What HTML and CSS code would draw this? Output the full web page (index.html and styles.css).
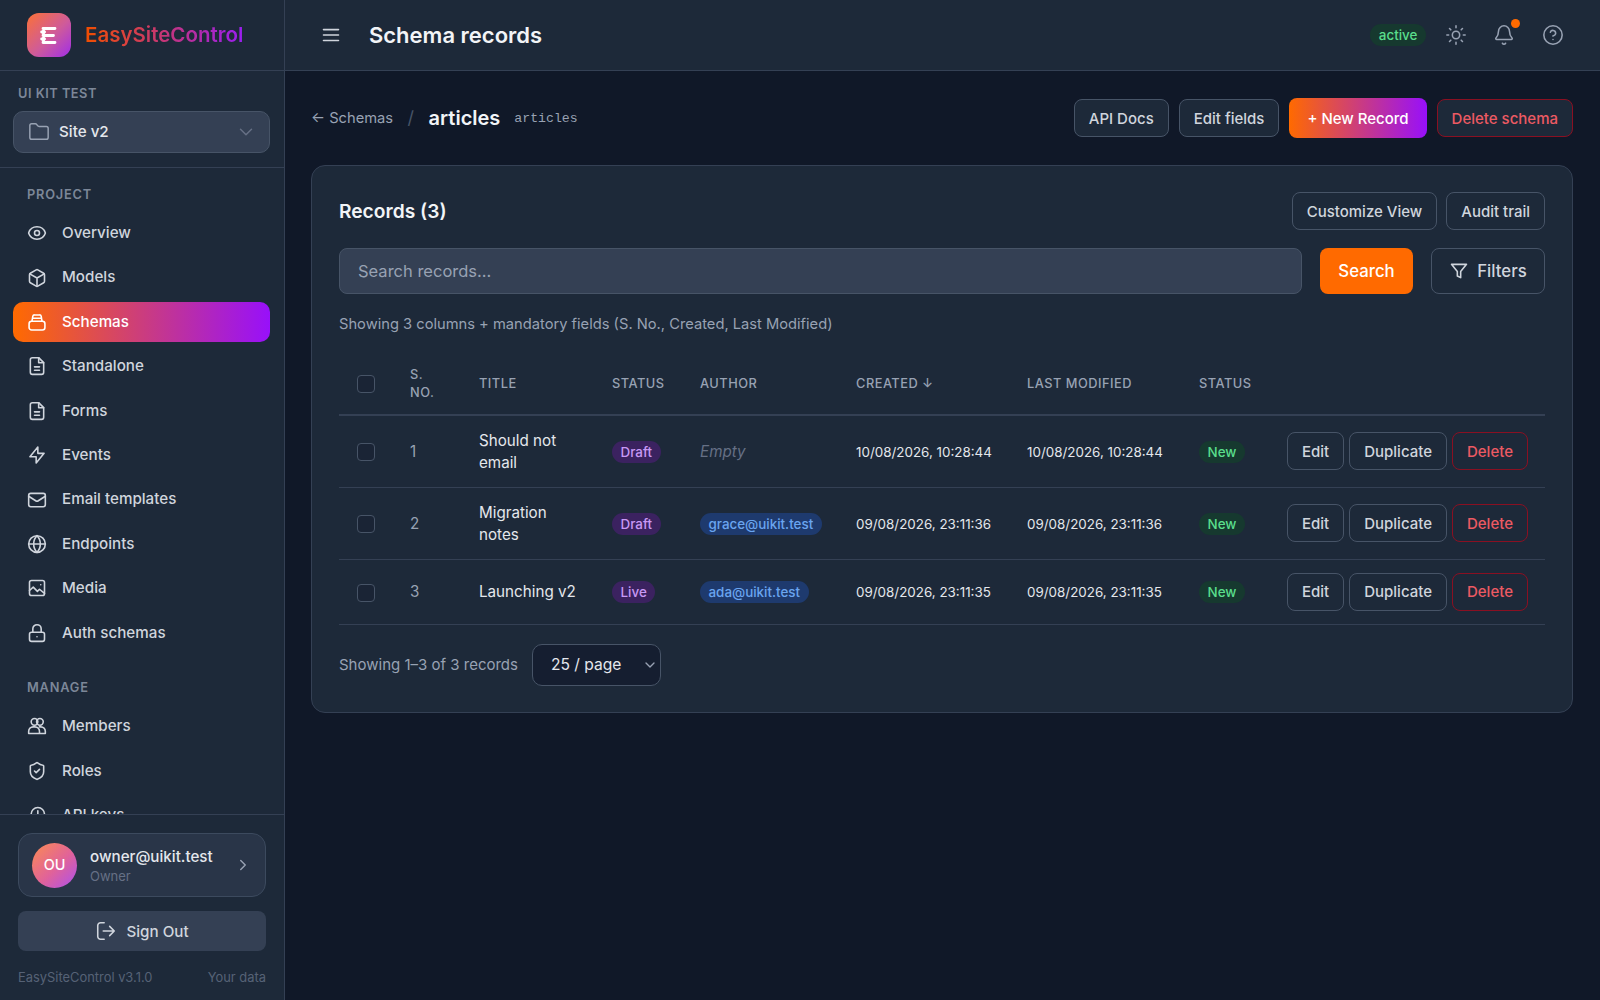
FILE: index.html
```html
<!DOCTYPE html>
<html lang="en">
<head>
<meta charset="utf-8">
<title>Schema records</title>
<link rel="stylesheet" href="styles.css">
</head>
<body>
<div class="app">
  <aside class="sidebar">
    <div class="brand">
      <div class="logo">
        <svg viewBox="0 0 24 24" width="24" height="24" fill="none" stroke="#fff" stroke-width="2.800" stroke-linecap="round"><path d="M6 5.500h12M6 12.500h10.500M6 19.500h12M6.500 5.500v14M4.600 9h3M4.600 16h3"/></svg>
      </div>
      <span class="brand-name">EasySiteControl</span>
    </div>
    <div class="org">
      <div class="org-label">UI KIT TEST</div>
      <div class="site-select">
        <svg class="ic site-ic" viewBox="0 0 24 24"><path d="M20 20a2 2 0 0 0 2-2V8a2 2 0 0 0-2-2h-7.900a2 2 0 0 1-1.690-.9L9.600 3.900A2 2 0 0 0 7.930 3H4a2 2 0 0 0-2 2v13a2 2 0 0 0 2 2Z"/></svg>
        <span class="site-name">Site v2</span>
        <svg class="ic site-chev" viewBox="0 0 24 24"><path d="m6 9 6 6 6-6"/></svg>
      </div>
    </div>
    <nav class="nav">
      <div class="nav-label">PROJECT</div>
      <a class="nav-item"><svg class="ic" viewBox="0 0 24 24"><path d="M2.040 12.320a1 1 0 0 1 0-.640C3.420 7.510 7.360 4.500 12 4.500s8.570 3 9.960 7.180c.07.200.07.430 0 .640C20.580 16.490 16.640 19.500 12 19.500s-8.570-3-9.960-7.180Z"/><circle cx="12" cy="12" r="3"/></svg>Overview</a>
      <a class="nav-item"><svg class="ic" viewBox="0 0 24 24"><path d="M21 16V8a2 2 0 0 0-1-1.730l-7-4a2 2 0 0 0-2 0l-7 4A2 2 0 0 0 3 8v8a2 2 0 0 0 1 1.730l7 4a2 2 0 0 0 2 0l7-4a2 2 0 0 0 1-1.730Z"/><path d="M3.300 7 12 12l8.700-5M12 22V12"/></svg>Models</a>
      <a class="nav-item active"><svg class="ic" viewBox="0 0 24 24"><rect x="2.500" y="11" width="19" height="10.500" rx="3"/><path d="m6 11 1-6a2 2 0 0 1 2-1.500h6a2 2 0 0 1 2 1.500l1 6M6.500 7.500h11"/></svg>Schemas</a>
      <a class="nav-item"><svg class="ic" viewBox="0 0 24 24"><path d="M14 2H6.500A2.500 2.500 0 0 0 4 4.500v15A2.500 2.500 0 0 0 6.500 22h11a2.500 2.500 0 0 0 2.500-2.500V8Z"/><path d="M14 2v6h6M9 13h6M9 17h6"/></svg>Standalone</a>
      <a class="nav-item"><svg class="ic" viewBox="0 0 24 24"><path d="M14 2H6.500A2.500 2.500 0 0 0 4 4.500v15A2.500 2.500 0 0 0 6.500 22h11a2.500 2.500 0 0 0 2.500-2.500V8Z"/><path d="M14 2v6h6M9 13h6M9 17h6"/></svg>Forms</a>
      <a class="nav-item"><svg class="ic" viewBox="0 0 24 24"><path d="M13 2.500V10h7.500L11 21.500V14H3.500Z"/></svg>Events</a>
      <a class="nav-item"><svg class="ic" viewBox="0 0 24 24"><rect x="2" y="4" width="20" height="16" rx="2.500"/><path d="m2 7.500 8.900 5.700a2 2 0 0 0 2.200 0L22 7.500"/></svg>Email templates</a>
      <a class="nav-item"><svg class="ic" viewBox="0 0 24 24"><circle cx="12" cy="12" r="10"/><path d="M2 12h20M12 2c2.600 2.700 4 6.300 4 10s-1.400 7.300-4 10c-2.600-2.700-4-6.300-4-10s1.400-7.300 4-10Z"/></svg>Endpoints</a>
      <a class="nav-item"><svg class="ic" viewBox="0 0 24 24"><rect x="3" y="3" width="18" height="18" rx="2.500"/><path d="m3 15 4.500-4 5 5 2.500-2.500 6 5M16.500 8h.01"/></svg>Media</a>
      <a class="nav-item"><svg class="ic" viewBox="0 0 24 24"><rect x="3" y="11" width="18" height="11" rx="2.500"/><path d="M7 11V7a5 5 0 0 1 10 0v4M12 16.500h.01"/></svg>Auth schemas</a>
      <div class="nav-label manage">MANAGE</div>
      <a class="nav-item"><svg class="ic" viewBox="0 0 24 24"><circle cx="9" cy="7" r="4"/><circle cx="15.500" cy="7" r="4"/><path d="M2 21v-2.500A5.500 5.500 0 0 1 7.500 13h2a5.500 5.500 0 0 1 5.500 5.500V21ZM15 13h1.500a5.500 5.500 0 0 1 5.500 5.500V21h-7"/></svg>Members</a>
      <a class="nav-item"><svg class="ic" viewBox="0 0 24 24"><path d="M20 13c0 5-3.500 7.500-7.660 8.950a1 1 0 0 1-.670-.010C7.500 20.500 4 18 4 13V6a1 1 0 0 1 1-1c2 0 4.500-1.200 6.240-2.720a1.170 1.170 0 0 1 1.520 0C14.510 3.810 17 5 19 5a1 1 0 0 1 1 1Z"/><path d="m9 12 2 2 4-4"/></svg>Roles</a>
      <a class="nav-item"><svg class="ic" viewBox="0 0 24 24"><circle cx="13" cy="11" r="8"/><path d="M13 7v4l-2 2M7 17l-3 4"/></svg>API keys</a>
    </nav>
    <div class="side-foot">
      <div class="user-card">
        <div class="avatar">OU</div>
        <div class="user-text">
          <div class="user-mail">owner@uikit.test</div>
          <div class="user-role">Owner</div>
        </div>
        <svg class="ic user-chev" viewBox="0 0 24 24"><path d="m9 18 6-6-6-6"/></svg>
      </div>
      <button class="signout"><svg class="ic" viewBox="0 0 24 24"><path d="M10 21H6a3 3 0 0 1-3-3V6a3 3 0 0 1 3-3h4M16 17l5-5-5-5M21 12H9"/></svg>Sign Out</button>
      <div class="meta"><span>EasySiteControl v3.1.0</span><span>Your data</span></div>
    </div>
  </aside>

  <div class="main">
    <header class="topbar">
      <svg class="ic menu" viewBox="0 0 24 24"><path d="M3 5.500h18M3 12h18M3 18.500h18"/></svg>
      <h1 class="page-title">Schema records</h1>
      <div class="top-right">
        <span class="pill pill-green active-pill">active</span>
        <svg class="ic top-ic" viewBox="0 0 24 24"><circle cx="12" cy="12" r="4"/><path d="M12 2v2M12 20v2M4.930 4.930l1.410 1.410M17.660 17.660l1.410 1.410M2 12h2M20 12h2M6.340 17.660l-1.410 1.410M19.070 4.930l-1.410 1.410"/></svg>
        <span class="bell"><svg class="ic top-ic" viewBox="0 0 24 24"><path d="M10.270 21a2 2 0 0 0 3.460 0M3.260 15.330A1 1 0 0 0 4 17h16a1 1 0 0 0 .74-1.670C19.410 13.960 18 12.500 18 8A6 6 0 0 0 6 8c0 4.500-1.410 5.960-2.740 7.330Z"/></svg><i class="dot"></i></span>
        <svg class="ic top-ic" viewBox="0 0 24 24"><circle cx="12" cy="12" r="10"/><path d="M9.090 9a3 3 0 0 1 5.830 1c0 2-3 3-3 3M12 17h.01"/></svg>
      </div>
    </header>

    <main class="content">
      <div class="crumbs">
        <div class="crumb-left">
          <a class="back">← Schemas</a>
          <span class="slash">/</span>
          <span class="crumb-title">articles</span>
          <code class="crumb-code">articles</code>
        </div>
        <div class="crumb-actions">
          <button class="btn btn-dark">API Docs</button>
          <button class="btn btn-dark">Edit fields</button>
          <button class="btn btn-grad">+ New Record</button>
          <button class="btn btn-danger-dark">Delete schema</button>
        </div>
      </div>

      <section class="card">
        <div class="card-head">
          <h2 class="card-title">Records (3)</h2>
          <div class="card-actions">
            <button class="btn">Customize View</button>
            <button class="btn">Audit trail</button>
          </div>
        </div>
        <div class="search-row">
          <div class="search-input">Search records...</div>
          <button class="search-btn">Search</button>
          <button class="filter-btn"><svg class="ic" viewBox="0 0 24 24"><path d="M3 4h18l-7 8.500V20l-4-2v-5.500Z"/></svg>Filters</button>
        </div>
        <p class="hint">Showing 3 columns + mandatory fields (S. No., Created, Last Modified)</p>

        <table class="records">
          <colgroup>
            <col class="c1"><col class="c2"><col class="c3"><col class="c4"><col class="c5"><col class="c6"><col class="c7"><col class="c8"><col class="c9">
          </colgroup>
          <thead>
            <tr>
              <th><input class="check" type="checkbox" aria-label="Select all"></th>
              <th>S. No.</th>
              <th>Title</th>
              <th>Status</th>
              <th>Author</th>
              <th>Created ↓</th>
              <th>Last Modified</th>
              <th>Status</th>
              <th></th>
            </tr>
          </thead>
          <tbody>
            <tr>
              <td><input class="check" type="checkbox" aria-label="Select"></td>
              <td class="num">1</td>
              <td class="ttl">Should not email</td>
              <td><span class="pill pill-purple">Draft</span></td>
              <td><em class="empty">Empty</em></td>
              <td class="date">10/08/2026, 10:28:44</td>
              <td class="date">10/08/2026, 10:28:44</td>
              <td><span class="pill pill-green">New</span></td>
              <td><div class="row-actions"><button class="btn">Edit</button><button class="btn">Duplicate</button><button class="btn btn-danger">Delete</button></div></td>
            </tr>
            <tr>
              <td><input class="check" type="checkbox" aria-label="Select"></td>
              <td class="num">2</td>
              <td class="ttl">Migration notes</td>
              <td><span class="pill pill-purple">Draft</span></td>
              <td><span class="pill pill-blue">grace@uikit.test</span></td>
              <td class="date">09/08/2026, 23:11:36</td>
              <td class="date">09/08/2026, 23:11:36</td>
              <td><span class="pill pill-green">New</span></td>
              <td><div class="row-actions"><button class="btn">Edit</button><button class="btn">Duplicate</button><button class="btn btn-danger">Delete</button></div></td>
            </tr>
            <tr>
              <td><input class="check" type="checkbox" aria-label="Select"></td>
              <td class="num">3</td>
              <td class="ttl">Launching v2</td>
              <td><span class="pill pill-purple">Live</span></td>
              <td><span class="pill pill-blue">ada@uikit.test</span></td>
              <td class="date">09/08/2026, 23:11:35</td>
              <td class="date">09/08/2026, 23:11:35</td>
              <td><span class="pill pill-green">New</span></td>
              <td><div class="row-actions"><button class="btn">Edit</button><button class="btn">Duplicate</button><button class="btn btn-danger">Delete</button></div></td>
            </tr>
          </tbody>
        </table>

        <div class="pager">
          <span class="pager-text">Showing 1–3 of 3 records</span>
          <div class="page-select"><span class="page-value">25 / page</span><svg class="ic" viewBox="0 0 24 24"><path d="m6 9 6 6 6-6"/></svg></div>
        </div>
      </section>
    </main>
  </div>
</div>
</body>
</html>
```

FILE: styles.css
```css
* { box-sizing: border-box; }
html, body { margin: 0; height: 100%; }
body {
  background: #101828;
  color: #e4e7ec;
  font-family: Inter, "Liberation Sans", sans-serif;
  font-size: 14px;
  line-height: 1.6;
  overflow: hidden;
}
button { font-family: inherit; cursor: pointer; }
h1, h2, p { margin: 0; }

.ic {
  width: 20px;
  height: 20px;
  fill: none;
  stroke: currentColor;
  stroke-width: 1.9;
  stroke-linecap: round;
  stroke-linejoin: round;
  flex: none;
}

.app { display: flex; height: 1000px; }

/* sidebar */
.sidebar {
  width: 285px;
  flex: none;
  display: flex;
  flex-direction: column;
  background: #1d2939;
  border-right: 1px solid #344054;
}
.brand {
  height: 71px;
  flex: none;
  display: flex;
  align-items: center;
  gap: 14px;
  padding: 0 27px;
  border-bottom: 1px solid #344054;
}
.logo {
  width: 44px;
  height: 44px;
  border-radius: 12px;
  background: linear-gradient(135deg, #fb7136, #cf5b9a 55%, #a02ee8);
  display: flex;
  align-items: center;
  justify-content: center;
}
.brand-name {
  font-size: 20.5px;
  font-weight: 600;
  line-height: 1.2;
  background: linear-gradient(90deg, #f04e00, #9a1ef0);
  -webkit-background-clip: text;
  background-clip: text;
  color: transparent;
}
.org {
  flex: none;
  height: 97px;
  padding: 13px 14px 0 13px;
  border-bottom: 1px solid #344054;
}
.org-label {
  padding-left: 5px;
  font-size: 12.8px;
  line-height: 20px;
  font-weight: 600;
  letter-spacing: 0.5px;
  color: #7c8798;
}
.site-select {
  margin-top: 7px;
  height: 42px;
  display: flex;
  align-items: center;
  padding: 0 12px 0 14px;
  background: #344054;
  border: 1px solid #475467;
  border-radius: 10px;
  color: #e4e7ec;
}
.site-ic { width: 22px; height: 22px; color: #98a2b3; stroke-width: 1.6; }
.site-name { margin-left: 9px; padding-top: 1px; flex: 1; font-size: 15.2px; font-weight: 500; }
.site-chev { width: 22px; height: 22px; color: #667085; stroke-width: 1.6; }

.nav {
  flex: 1;
  min-height: 0;
  overflow: hidden;
  padding: 16.600px 14px 0 13px;
  display: flex;
  flex-direction: column;
  gap: 4px;
}
.nav-label {
  padding: 0 14px;
  font-size: 12.8px;
  line-height: 20px;
  font-weight: 600;
  letter-spacing: 0.8px;
  color: #7c8798;
  margin-bottom: 4.400px;
}
.nav-label.manage { margin-top: 21px; }
.nav-item {
  flex: none;
  display: flex;
  align-items: center;
  gap: 15px;
  height: 40.400px;
  padding: 0 14px;
  border-radius: 10px;
  color: #d0d5dd;
  font-size: 15.2px;
  font-weight: 500;
}
.nav-item.active {
  color: #fff;
  background: linear-gradient(90deg, #ff6a00, #9810fa);
}
.side-foot {
  flex: none;
  height: 186px;
  border-top: 1px solid #344054;
  padding: 18px 18px 0 18px;
  background: #1d2939;
}
.user-card {
  height: 64px;
  display: flex;
  align-items: center;
  gap: 13px;
  padding: 0 13px;
  background: #293548;
  border: 1px solid #3c4a5e;
  border-radius: 14px;
}
.avatar {
  width: 45px;
  height: 45px;
  flex: none;
  border-radius: 50%;
  display: flex;
  align-items: center;
  justify-content: center;
  background: linear-gradient(135deg, #fb8c50, #e0629a 55%, #ad50ee);
  color: #fff;
  font-size: 14.4px;
  font-weight: 500;
}
.user-text { flex: 1; min-width: 0; }
.user-mail { font-size: 15.2px; line-height: 21px; font-weight: 500; color: #e4e7ec; }
.user-role { font-size: 13px; line-height: 18px; color: #667085; }
.user-chev { width: 18px; height: 18px; color: #98a2b3; }
.signout {
  margin-top: 14px;
  width: 100%;
  height: 40px;
  display: flex;
  align-items: center;
  justify-content: center;
  gap: 9px;
  background: #344054;
  border: 0;
  border-radius: 8px;
  color: #d0d5dd;
  font-size: 15.2px;
  font-weight: 500;
}
.signout .ic { width: 22px; height: 22px; stroke-width: 1.7; }
.meta {
  margin-top: 17px;
  display: flex;
  justify-content: space-between;
  font-size: 12.9px;
  line-height: 20px;
  color: #566276;
}

/* main */
.main { flex: 1; min-width: 0; display: flex; flex-direction: column; }
.topbar {
  height: 71px;
  flex: none;
  display: flex;
  align-items: center;
  padding: 0 36px 0 36px;
  background: #1d2939;
  border-bottom: 1px solid #344054;
}
.menu { color: #d0d5dd; }
.page-title {
  margin-left: 28px;
  padding-top: 1px;
  font-size: 22px;
  font-weight: 600;
  line-height: 1.2;
  color: #f2f4f7;
}
.top-right { margin-left: auto; display: flex; align-items: center; gap: 26.700px; }
.top-ic { width: 22px; height: 22px; color: #98a2b3; display: block; stroke-width: 1.7; }
.bell { position: relative; display: block; }
.dot {
  position: absolute;
  top: -5px;
  right: -5px;
  width: 9px;
  height: 9px;
  border-radius: 50%;
  background: #ff6a00;
}
.pill {
  display: inline-block;
  padding: 0 8.500px;
  border-radius: 999px;
  font-size: 13.4px;
  line-height: 22px;
  font-weight: 500;
  white-space: nowrap;
}
.pill-green { background: #16392f; color: #5ade8c; }
.pill-purple { background: #3b2260; color: #c899f5; }
.pill-blue { background: #1e3a6e; color: #6aa5f0; }
.active-pill { margin-right: -8px; }

.content { flex: 1; padding: 28px 27px 0 26px; }
.crumbs { display: flex; justify-content: space-between; align-items: center; height: 38px; }
.crumb-left { display: flex; align-items: center; }
.back { padding-top: 1px; color: #98a2b3; font-size: 14.7px; }
.slash { margin: 0 14.500px; color: #475467; font-size: 18px; }
.crumb-title { font-size: 20px; font-weight: 600; color: #f2f4f7; line-height: 1.2; }
.crumb-code { margin-left: 14px; padding-top: 1px; font-family: "Liberation Mono", monospace; font-size: 13.2px; color: #98a2b3; }
.crumb-actions { display: flex; align-items: center; gap: 10px; }

.btn {
  height: 38px;
  padding: 0 14px;
  background: transparent;
  border: 1px solid #475467;
  border-radius: 8px;
  color: #d0d5dd;
  font-size: 15px;
  font-weight: 500;
  white-space: nowrap;
}
.btn-dark { background: #1d2939; }
.btn-grad {
  height: 40px;
  padding: 0 18px;
  border: 0;
  color: #fff;
  background: linear-gradient(90deg, #ff6a00, #9810fa);
}
.btn-danger, .btn-danger-dark { border-color: #8a1022; color: #ec5a63; }
.btn-danger-dark { background: #1d2939; }

.card {
  margin-top: 28px;
  height: 548px;
  padding: 26px 27px;
  background: #1d2939;
  border: 1px solid #344054;
  border-radius: 14px;
}
.card-head { display: flex; justify-content: space-between; align-items: center; height: 38px; }
.card-title { padding-top: 1px; font-size: 19.2px; font-weight: 600; color: #f2f4f7; line-height: 1.2; }
.card-actions { display: flex; gap: 9px; }

.search-row { margin-top: 18px; display: flex; }
.search-input {
  flex: 1;
  height: 46px;
  padding: 0 18px;
  display: flex;
  align-items: center;
  background: #344054;
  border: 1px solid #475467;
  border-radius: 8px;
  color: #98a2b3;
  font-size: 16.5px;
}
.search-btn {
  margin-left: 18px;
  width: 93px;
  height: 46px;
  background: #ff6a00;
  border: 0;
  border-radius: 8px;
  color: #fff;
  font-size: 16.8px;
  font-weight: 500;
}
.filter-btn {
  margin-left: 18px;
  width: 114px;
  height: 46px;
  display: flex;
  align-items: center;
  justify-content: center;
  gap: 8px;
  background: transparent;
  border: 1px solid #475467;
  border-radius: 8px;
  color: #d0d5dd;
  font-size: 16.8px;
  font-weight: 500;
}
.hint { margin-top: 18px; height: 24px; font-size: 14.7px; line-height: 24px; color: #98a2b3; }

.records { margin-top: 15px; width: 100%; border-collapse: collapse; table-layout: fixed; }
.c1 { width: 53px; } .c2 { width: 69px; } .c3 { width: 133px; } .c4 { width: 88px; }
.c5 { width: 156px; } .c6 { width: 171px; } .c7 { width: 172px; } .c8 { width: 88px; } .c9 { width: 276px; }
.records th {
  height: 64px;
  padding: 3px 18px 0;
  text-align: left;
  vertical-align: middle;
  font-size: 12.8px;
  line-height: 18px;
  font-weight: 500;
  letter-spacing: 0.5px;
  text-transform: uppercase;
  color: #98a2b3;
  border-bottom: 2px solid #344054;
}
.records td {
  padding: 14px 14px 12px 18px;
  vertical-align: middle;
  line-height: 22.400px;
  border-bottom: 1px solid #344054;
  color: #e4e7ec;
}
.records td:last-child { padding: 13px 0; padding-left: 18px; }
.check {
  appearance: none;
  -webkit-appearance: none;
  display: block;
  margin: 0;
  width: 18px;
  height: 18px;
  background: #1a2435;
  border: 1.500px solid #475467;
  border-radius: 4px;
}
.records td.num { color: #98a2b3; font-size: 15.2px; }
.records td.ttl { font-size: 15.2px; }
.records td.date { font-size: 13.4px; padding-right: 0; }
.empty { color: #667085; font-size: 15.2px; }
.row-actions { display: flex; gap: 5px; }

.pager { margin-top: 19px; display: flex; align-items: center; gap: 14px; }
.pager-text { padding-top: 1px; color: #98a2b3; font-size: 15px; }
.page-select {
  width: 129px;
  height: 42px;
  padding: 0 2px 0 18px;
  display: flex;
  align-items: center;
  justify-content: space-between;
  background: #151e30;
  border: 1px solid #475467;
  border-radius: 10px;
  color: #e4e7ec;
  font-size: 15.6px;
}
.page-value { padding-top: 1px; }
.page-select .ic { width: 16px; height: 16px; color: #98a2b3; stroke-width: 2; }
```
